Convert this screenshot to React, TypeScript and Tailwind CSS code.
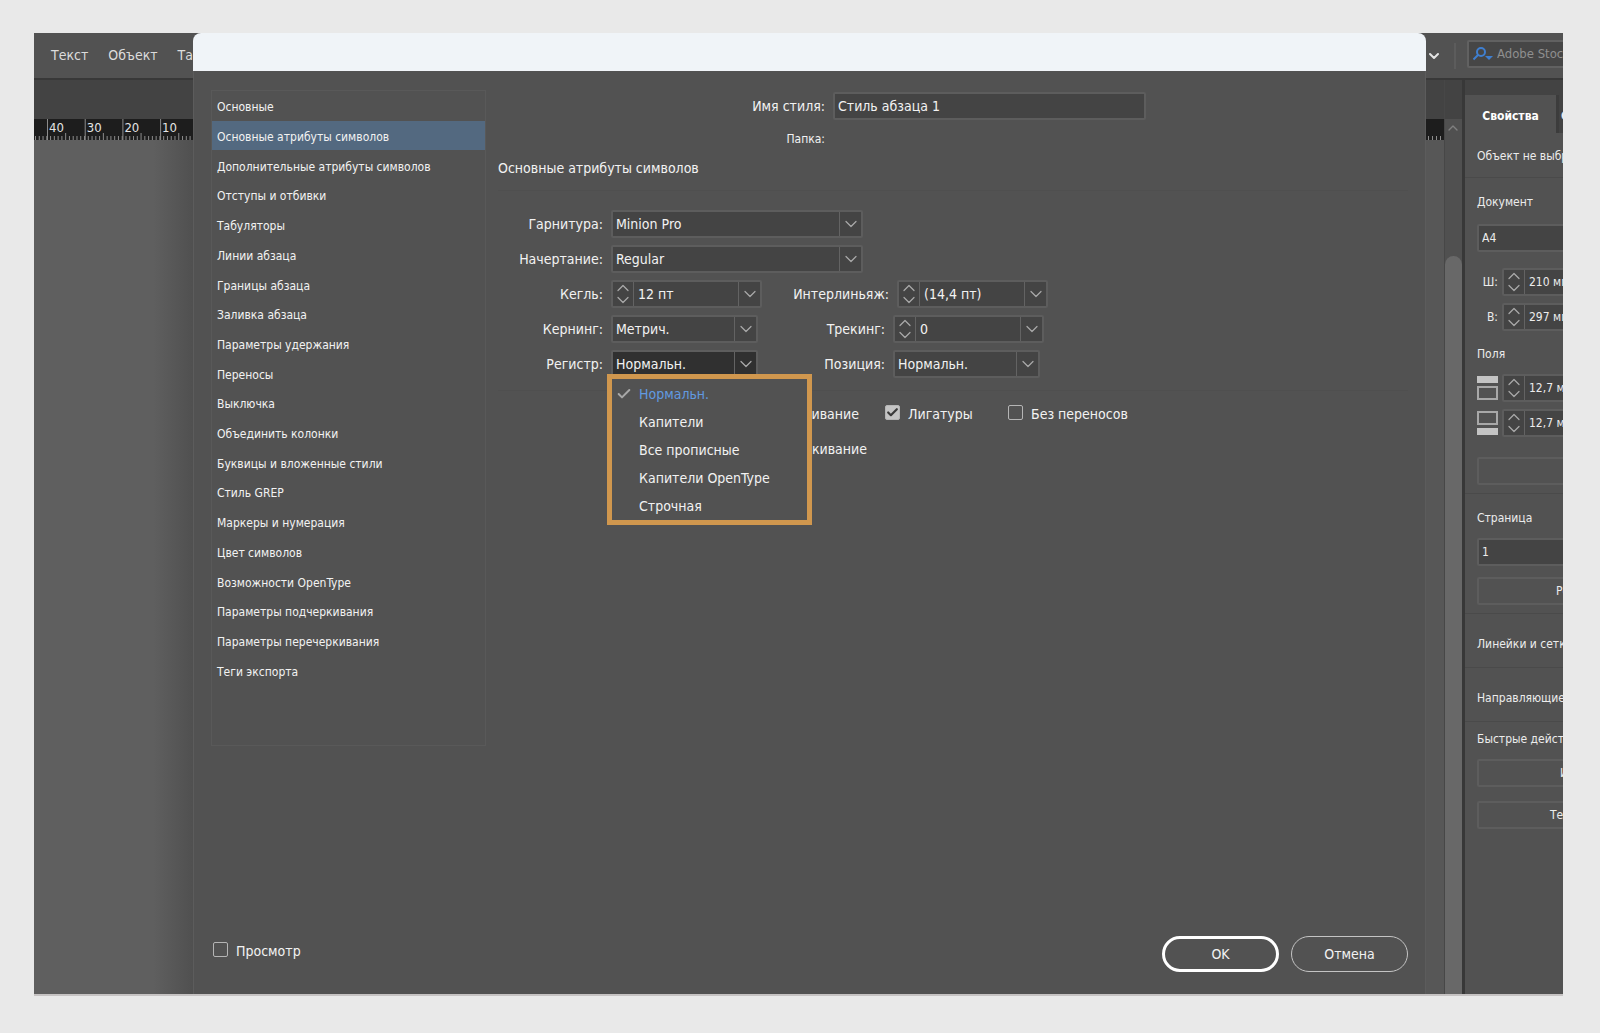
import type { ReactNode } from "react";
import { Check, ChevronDown, ChevronUp } from "lucide-react";

const sections = [
  "Основные",
  "Основные атрибуты символов",
  "Дополнительные атрибуты символов",
  "Отступы и отбивки",
  "Табуляторы",
  "Линии абзаца",
  "Границы абзаца",
  "Заливка абзаца",
  "Параметры удержания",
  "Переносы",
  "Выключка",
  "Объединить колонки",
  "Буквицы и вложенные стили",
  "Стиль GREP",
  "Маркеры и нумерация",
  "Цвет символов",
  "Возможности OpenType",
  "Параметры подчеркивания",
  "Параметры перечеркивания",
  "Теги экспорта",
];

const cases = ["Нормальн.", "Капители", "Все прописные", "Капители OpenType", "Строчная"];

const box = "flex h-7 shrink-0 rounded-xs border-2 border-[#5d5d5d] bg-[#444]";
const panelButton = "h-7 w-full rounded-xs border-2 border-[#5d5d5d] text-left";

function Spinner({ label }: { label: string }) {
  return (
    <span className="flex w-[21px] shrink-0 flex-col items-center justify-center border-r border-[#636363] text-[#a8a8a8]">
      <button type="button" aria-label={`${label} больше`} className="flex h-3 items-center">
        <ChevronUp className="size-5" strokeWidth={1.5} />
      </button>
      <button type="button" aria-label={`${label} меньше`} className="flex h-3 items-center">
        <ChevronDown className="size-5" strokeWidth={1.5} />
      </button>
    </span>
  );
}

function Arrow() {
  return (
    <span className="flex w-[22px] shrink-0 items-center justify-center border-l border-[#636363] text-[#a8a8a8]">
      <ChevronDown className="size-5" strokeWidth={1.5} />
    </span>
  );
}

function SelectBox({ id, value, className }: { id: string; value: string; className: string }) {
  return (
    <div className={`${box} ${className}`}>
      <select id={id} className="min-w-0 flex-1 appearance-none bg-transparent pl-[3px] outline-none">
        <option>{value}</option>
      </select>
      <Arrow />
    </div>
  );
}

function ComboBox({ id, value, label }: { id: string; value: string; label: string }) {
  return (
    <div className={`${box} w-[151px]`}>
      <Spinner label={label} />
      <input id={id} defaultValue={value} className="w-0 min-w-0 flex-1 bg-transparent pl-1 outline-none" />
      <button type="button" aria-label={`${label}: список`} className="flex">
        <Arrow />
      </button>
    </div>
  );
}

function Label({ id, wide, children }: { id: string; wide?: boolean; children: ReactNode }) {
  return (
    <label htmlFor={id} className={`${wide ? "w-[127px]" : "w-[105px]"} mr-2 shrink-0 text-right`}>
      {children}
    </label>
  );
}

function Tick({ label, checked }: { label: string; checked?: boolean }) {
  return (
    <label className="flex items-center gap-2">
      <span className="mb-1 grid size-[15px] shrink-0">
        <input
          type="checkbox"
          defaultChecked={checked}
          className="peer col-start-1 row-start-1 size-[15px] appearance-none rounded-xs border border-[#b5b5b5] checked:bg-[#c4c4c4]"
        />
        <Check className="invisible col-start-1 row-start-1 size-[15px] p-px text-[#3a3a3a] peer-checked:visible" strokeWidth={4} />
      </span>
      {label}
    </label>
  );
}

function Ruler() {
  const ticks = Array.from({ length: 42 }, (_, i) => i);
  return (
    <svg className="block h-[21px] w-full bg-[#1d1d1d]" aria-hidden="true">
      {ticks.map((i) => (
        <rect key={i} x={1 + i * 3.77} y={i % 10 === 8 ? 14 : 17} width="1" height="7" fill="#8c8c8c" />
      ))}
      {["40", "30", "20", "10"].map((n, i) => (
        <g key={n}>
          <rect x={13 + i * 37.7} y="0" width="1" height="21" fill="#8c8c8c" />
          <text x={15 + i * 37.7} y="13" fontSize="13" fill="#e4e4e4">
            {n}
          </text>
        </g>
      ))}
    </svg>
  );
}

function Workspace() {
  return (
    <div className="flex w-[159px] shrink-0 flex-col overflow-hidden">
      <nav className="flex h-[47px] shrink-0 items-center gap-5 border-b-2 border-[#383838] pl-[17px] text-[14px] whitespace-nowrap text-[#dcdcdc]">
        <a href="#text">Текст</a>
        <a href="#object">Объект</a>
        <a href="#table">Таблица</a>
      </nav>
      <div className="h-[39px] shrink-0 bg-[#434343]" />
      <Ruler />
      <div className="flex-1 bg-linear-to-r from-[#5f5f5f] from-75% to-[#505050]" />
    </div>
  );
}

function Sections() {
  return (
    <nav className="-mt-0.5 h-[656px] w-[275px] shrink-0 border border-[#595959] text-[12px]">
      <ul className="grid h-[594px] auto-rows-fr">
        {sections.map((name, i) => (
          <li key={name} className={i === 1 ? "flex bg-[#536980]" : "flex"}>
            <a href="#section" className="flex flex-1 items-center pt-[3px] pl-[5px] whitespace-nowrap">
              {name}
            </a>
          </li>
        ))}
      </ul>
    </nav>
  );
}

function CaseMenu() {
  return (
    <ul className="absolute top-[22px] -left-[6px] z-10 w-[205px] border-[5px] border-[#d0974e] bg-[#525252] pt-px">
      {cases.map((name, i) => (
        <li key={name} className={i === 0 ? "flex h-7 items-center text-[#619ae0]" : "flex h-7 items-center"}>
          <span className="flex w-[27px] shrink-0 pl-1">
            {i === 0 && <Check className="size-4 text-[#a8a8a8]" strokeWidth={3} />}
          </span>
          {name}
        </li>
      ))}
    </ul>
  );
}

function CharacterForm() {
  return (
    <form className="min-w-0 flex-1 text-[14px] whitespace-nowrap">
      <div className="flex items-center">
        <label htmlFor="style-name" className="mr-2 w-[327px] text-right">
          Имя стиля:
        </label>
        <div className={`${box} w-[313px]`}>
          <input id="style-name" defaultValue="Стиль абзаца 1" className="min-w-0 flex-1 bg-transparent pl-[3px] outline-none" />
        </div>
      </div>
      <p className="mt-[7px] w-[327px] text-right text-[12px] leading-6">Папка:</p>
      <h2 className="mt-[3px] border-b border-[#4f4f4f] pb-2 leading-7">Основные атрибуты символов</h2>

      <div className="mt-[19px] flex flex-col gap-[7px] border-b border-[#4f4f4f] pb-3">
        <div className="flex items-center">
          <Label id="family">Гарнитура:</Label>
          <SelectBox id="family" value="Minion Pro" className="w-[252px]" />
        </div>
        <div className="flex items-center">
          <Label id="face">Начертание:</Label>
          <SelectBox id="face" value="Regular" className="w-[252px]" />
        </div>
        <div className="flex items-center">
          <Label id="size">Кегль:</Label>
          <ComboBox id="size" value="12 пт" label="Кегль" />
          <Label id="leading" wide>Интерлиньяж:</Label>
          <ComboBox id="leading" value="(14,4 пт)" label="Интерлиньяж" />
        </div>
        <div className="flex items-center">
          <Label id="kerning">Кернинг:</Label>
          <SelectBox id="kerning" value="Метрич." className="w-[147px]" />
          <Label id="tracking" wide>Трекинг:</Label>
          <ComboBox id="tracking" value="0" label="Трекинг" />
        </div>
        <div className="flex items-center">
          <Label id="case">Регистр:</Label>
          <div className="relative flex h-7 w-[147px] shrink-0 rounded-xs border-2 border-[#5d5d5d] bg-[#303030]">
            <select id="case" className="min-w-0 flex-1 appearance-none bg-transparent pl-[3px] outline-none">
              {cases.map((name) => (
                <option key={name}>{name}</option>
              ))}
            </select>
            <Arrow />
            <CaseMenu />
          </div>
          <Label id="position" wide>Позиция:</Label>
          <SelectBox id="position" value="Нормальн." className="w-[147px]" />
        </div>
      </div>

      <div className="mt-[11px] flex h-6 items-center">
        <div className="flex w-[361px] justify-end">
          <Tick label="Подчеркивание" />
        </div>
        <div className="ml-[26px] w-[123px]">
          <Tick label="Лигатуры" checked />
        </div>
        <Tick label="Без переносов" />
      </div>
      <div className="mt-[11px] flex h-6 w-[369px] items-center justify-end">
        <Tick label="Зачеркивание" />
      </div>
    </form>
  );
}

function StyleDialog() {
  return (
    <main className="flex min-w-0 flex-1 flex-col rounded-t-lg border-x border-[#5c5c5c] bg-[#525252] text-[#f2f2f2]">
      <header className="-mx-px h-[38px] shrink-0 rounded-t-lg bg-[#f0f4f8]" />
      <div className="flex gap-3 px-[17px] pt-[21px]">
        <Sections />
        <CharacterForm />
      </div>
      <footer className="mt-auto flex items-center gap-3 px-[17px] pb-[22px] text-[14px]">
        <div className="mr-auto mb-1.5 pl-[2px]">
          <Tick label="Просмотр" />
        </div>
        <button type="button" className="h-9 w-[117px] rounded-full border-3 border-white">
          OK
        </button>
        <button type="button" className="h-9 w-[117px] rounded-full border border-[#c4c4c4]">
          Отмена
        </button>
      </footer>
    </main>
  );
}

function PanelField({ id, label, value }: { id: string; label: ReactNode; value: string }) {
  return (
    <div className="flex items-center">
      <label htmlFor={id} className="mr-1 flex w-[21px] justify-end">
        {label}
      </label>
      <div className={`${box} w-[120px]`}>
        <Spinner label={id} />
        <input id={id} defaultValue={value} className="w-0 min-w-0 flex-1 bg-transparent pl-1 outline-none" />
      </div>
    </div>
  );
}

function MarginIcon({ bottom }: { bottom?: boolean }) {
  return (
    <svg width="21" height="24" viewBox="0 0 21 24" className={bottom ? "rotate-180" : ""} aria-hidden="true">
      <rect x="0" y="0" width="21" height="7" fill="#c4c4c4" />
      <rect x="1" y="11" width="19" height="12" fill="none" stroke="#a8a8a8" strokeWidth="2" />
    </svg>
  );
}

function PropertiesPanel() {
  return (
    <aside className="min-w-0 flex-1 overflow-hidden border-l-3 border-[#383838] bg-[#525252] text-[12px] whitespace-nowrap">
      <div className="w-[220px]">
        <div className="flex bg-[#434343] pt-[15px] font-bold">
          <button type="button" className="h-[38px] w-[91px] bg-[#525252] pt-[3px] text-center text-white">
            Свойства
          </button>
          <button type="button" className="h-[38px] border-l-3 border-[#3c3c3c] pt-[3px] pl-[2px]">
            Страницы
          </button>
        </div>
        <p className="border-b border-[#4a4a4a] px-3 pt-[13px] pb-[11px] leading-5">Объект не выбран</p>
        <div className="flex flex-col border-b border-[#4a4a4a] px-3 pb-2">
          <h3 className="mt-[14px] mb-[12px] leading-5">Документ</h3>
          <div className={box}>
            <select aria-label="Формат" className="flex-1 appearance-none pl-[3px]">
              <option>A4</option>
            </select>
            <Arrow />
          </div>
          <div className="mt-4 flex flex-col gap-[7px]">
            <PanelField id="width" label="Ш:" value="210 мм" />
            <PanelField id="height" label="В:" value="297 мм" />
          </div>
          <h3 className="mt-[13px] mb-[10px] leading-5">Поля</h3>
          <div className="flex flex-col gap-[7px]">
            <PanelField id="top" label={<MarginIcon />} value="12,7 мм" />
            <PanelField id="bottom" label={<MarginIcon bottom />} value="12,7 мм" />
          </div>
          <button type="button" aria-label="Настроить макет" className={`${panelButton} mt-5`} />
        </div>
        <div className="flex flex-col border-b border-[#4a4a4a] px-3 pb-2">
          <h3 className="mt-[14px] mb-[10px] leading-5">Страница</h3>
          <div className={box}>
            <select aria-label="Номер страницы" className="flex-1 appearance-none pl-[3px]">
              <option>1</option>
            </select>
            <Arrow />
          </div>
          <button type="button" className={`${panelButton} mt-[11px] pl-[77px]`}>
            Редактировать
          </button>
        </div>
        <h3 className="border-b border-[#4a4a4a] px-3 pt-5 pb-[13px] leading-5">Линейки и сетки</h3>
        <h3 className="border-b border-[#4a4a4a] px-3 pt-5 pb-[13px] leading-5">Направляющие</h3>
        <div className="flex flex-col px-3">
          <h3 className="mt-[7px] mb-[10px] leading-5">Быстрые действия</h3>
          <button type="button" className={`${panelButton} pl-[81px]`}>
            Импорт
          </button>
          <button type="button" className={`${panelButton} mt-[14px] pl-[71px]`}>
            Текст
          </button>
        </div>
      </div>
    </aside>
  );
}

function RightSide() {
  return (
    <div className="flex w-[137px] shrink-0 flex-col overflow-hidden text-[#ececec]">
      <div className="flex h-[47px] shrink-0 items-center border-b-2 border-[#383838]">
        <ChevronDown className="size-4 shrink-0 text-[#e4e4e4]" strokeWidth={3} />
        <span className="ml-3 h-[26px] w-[2px] shrink-0 bg-[#5c5c5c]" />
        <label className="mb-1 ml-[11px] flex h-7 w-[140px] shrink-0 items-center rounded-xs border-2 border-[#616161] bg-[#464646] pl-1">
          <svg width="20" height="14" viewBox="0 0 20 14" className="mr-1 shrink-0" aria-hidden="true">
            <circle cx="8" cy="5" r="4" fill="none" stroke="#3f7fd0" strokeWidth="2" />
            <path d="M5 8 L0.5 12.5" stroke="#3f7fd0" strokeWidth="2" />
            <path d="M12 9 H20 L16 13 Z" fill="#3f7fd0" />
          </svg>
          <input aria-label="Поиск" placeholder="Adobe Stock" className="w-24 bg-transparent text-[13px] outline-none placeholder:text-[#8f8f8f]" />
        </label>
      </div>
      <div className="flex flex-1">
        <div className="flex w-[18px] shrink-0 flex-col bg-[#575757]">
          <div className="h-[39px] bg-[#434343]" />
          <svg className="block h-[21px] w-full bg-[#1d1d1d]" aria-hidden="true">
            {[2, 6, 10, 14].map((x) => (
              <rect key={x} x={x} y="17" width="1" height="4" fill="#8c8c8c" />
            ))}
          </svg>
        </div>
        <div className="flex w-[18px] shrink-0 flex-col border-l border-[#474747] bg-[#505050]">
          <div className="h-[39px] bg-[#434343]" />
          <ChevronUp className="mt-px size-4 text-[#808080]" strokeWidth={2} />
          <div className="mt-[120px] flex-1 rounded-t-full bg-[#686868]" />
        </div>
        <PropertiesPanel />
      </div>
    </div>
  );
}

export default function App() {
  return (
    <div className="flex min-h-screen bg-[#e9e9e9] pt-[33px] pr-[37px] pb-[37px] pl-[34px] font-['DejaVu_Sans_Condensed','DejaVu_Sans',sans-serif]">
      <div className="flex min-w-0 flex-1 border-b-2 border-[#c6c3c3] bg-[#525252]">
        <Workspace />
        <StyleDialog />
        <RightSide />
      </div>
    </div>
  );
}
